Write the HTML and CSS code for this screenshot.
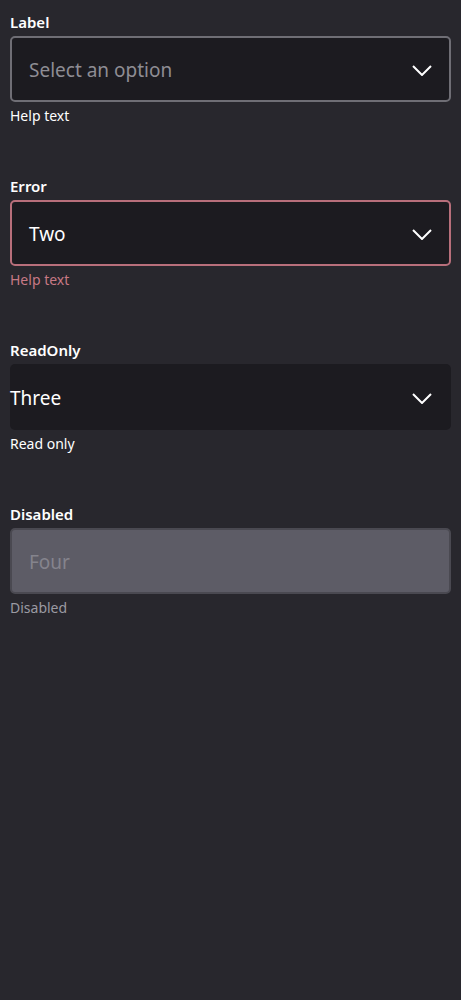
FILE: index.html
```html
<!DOCTYPE html>
<html>
<head>
<meta charset="utf-8">
<link rel="stylesheet" href="styles.css">
</head>
<body>
<div class="page">
  <div class="field">
    <div class="label">Label</div>
    <div class="select">
      <span class="value placeholder">Select an option</span>
      <svg class="chev" width="20" height="11" viewBox="0 0 20 11"><path d="M1 1 L10 10 L19 1" fill="none" stroke="#fff" stroke-width="2"/></svg>
    </div>
    <div class="help">Help text</div>
  </div>
  <div class="field">
    <div class="label">Error</div>
    <div class="select error">
      <span class="value">Two</span>
      <svg class="chev" width="20" height="11" viewBox="0 0 20 11"><path d="M1 1 L10 10 L19 1" fill="none" stroke="#fff" stroke-width="2"/></svg>
    </div>
    <div class="help help-error">Help text</div>
  </div>
  <div class="field">
    <div class="label">ReadOnly</div>
    <div class="select readonly">
      <span class="value">Three</span>
      <svg class="chev" width="20" height="11" viewBox="0 0 20 11"><path d="M1 1 L10 10 L19 1" fill="none" stroke="#fff" stroke-width="2"/></svg>
    </div>
    <div class="help">Read only</div>
  </div>
  <div class="field">
    <div class="label">Disabled</div>
    <div class="select disabled">
      <span class="value">Four</span>
    </div>
    <div class="help help-disabled">Disabled</div>
  </div>
</div>
</body>
</html>
```
FILE: styles.css
```css
html, body {
  margin: 0;
  padding: 0;
  background: #28272d;
  height: 100%;
}
body {
  font-family: "Noto Sans", "Open Sans", sans-serif;
  color: #ffffff;
}
.page {
  padding: 11px 10px 0 10px;
  display: flex;
  flex-direction: column;
  gap: 50px;
}
.field {
  display: flex;
  flex-direction: column;
}
.label {
  font-size: 15px;
  font-weight: 600;
  line-height: 22px;
  height: 22px;
  margin-bottom: 3px;
}
.select {
  box-sizing: border-box;
  height: 66px;
  background: #1c1b20;
  border: 2px solid #6f6e75;
  border-radius: 5px;
  display: flex;
  align-items: center;
  justify-content: space-between;
  padding: 2px 17px 0 17px;
}
.select.error {
  border-color: #b86f7b;
}
.select.readonly {
  border: none;
  padding: 2px 19px 0 0;
}
.select.disabled {
  background: #5d5c66;
  border-color: #4a4951;
}
.value {
  font-size: 19px;
  color: #ffffff;
}
.value.placeholder {
  color: #8e8d94;
}
.select.disabled .value {
  color: #85848d;
}
.chev {
  display: block;
}
.help {
  font-size: 14px;
  line-height: 18px;
  margin-top: 5px;
  color: #ffffff;
}
.help-error {
  color: #c77985;
}
.help-disabled {
  color: #9b9aa2;
}
```
